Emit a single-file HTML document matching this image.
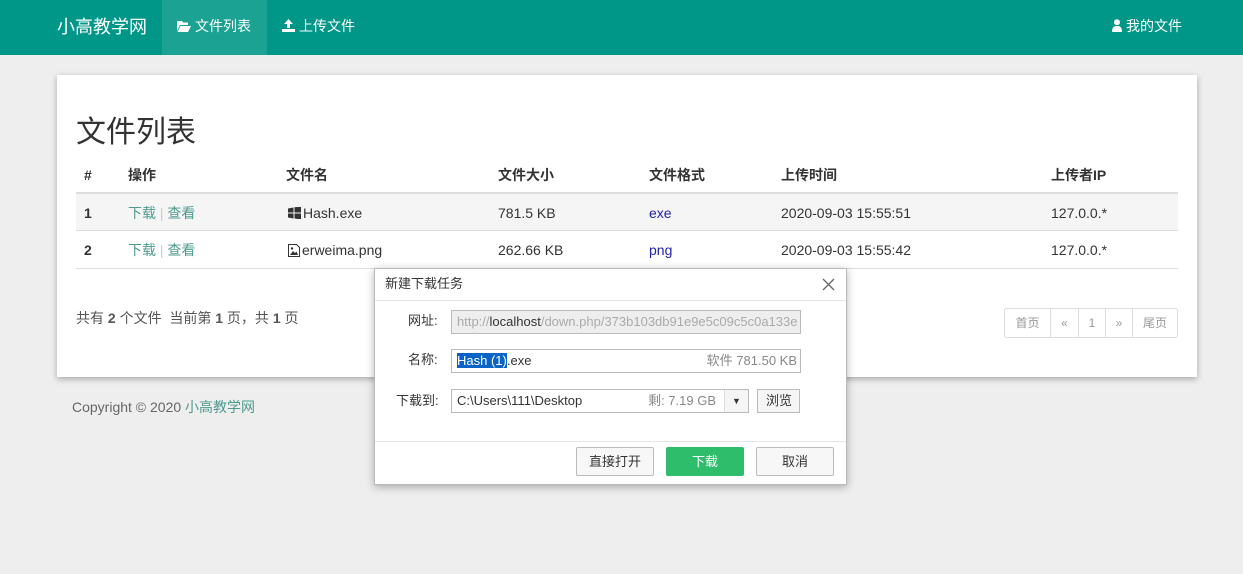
<!DOCTYPE html>
<html><head><meta charset="utf-8"><style>
*{box-sizing:border-box;margin:0;padding:0}
body{width:1243px;height:574px;background:#eee;font-family:"Liberation Sans","Noto Sans CJK SC",sans-serif;font-size:14px;color:#333;position:relative;overflow:hidden}
.nav{position:absolute;left:0;top:0;width:1243px;height:55px;background:#009688}
.nav a{position:absolute;color:#fff;text-decoration:none;top:0;height:51px;font-size:14px;display:flex;align-items:center}
.nav svg{margin-right:4px}
.brand{left:57px;font-size:18px!important}
.act{left:162px;width:105px;height:55px!important;background:#1ba293;padding-left:15px;padding-bottom:4px}
.panel{position:absolute;left:57px;top:75px;width:1140px;height:302px;background:#fff;box-shadow:0 2px 6px rgba(0,0,0,.3)}
h1{position:absolute;left:19px;top:38px;font-size:30px;line-height:40px;font-weight:normal;color:#333}
.t{position:absolute;font-size:14px;line-height:20px;display:flex;align-items:center}
.b{font-weight:bold}
.g{color:#4e9a8e}
.bl{color:#2222aa}
.pg{position:absolute;left:947px;top:233px;height:30px;display:flex;border:1px solid #ddd;border-radius:3px}
.pg span{border-left:1px solid #ddd;line-height:28px;color:#999;font-size:12px;text-align:center}
.dlg{position:absolute;left:374px;top:268px;width:473px;height:217px;background:#fff;border:1px solid #bbb;box-shadow:0 2px 8px rgba(0,0,0,.3);font-size:13px}
.lb{position:absolute;line-height:18px}
.inp{position:absolute;border:1px solid #bbb;height:24px;line-height:22px;padding-left:5px;font-size:13px}
.btn{position:absolute;top:178px;height:29px;width:78px;border:1px solid #bbb;border-radius:2px;background:#f7f7f7;text-align:center;line-height:27px}
</style></head><body>
<div class="nav">
<a class="brand">小高教学网</a>
<a class="act"><svg width="14" height="12" viewBox="0 0 14 12"><path d="M0 1h5l1 1.5h5V5H3L0 11z" fill="#fff"/><path d="M3.5 6H14l-3 6H0.5z" fill="#fff"/></svg>文件列表</a>
<a style="left:282px"><svg width="13" height="13" viewBox="0 0 13 13"><path d="M6.5 0L2 5h3v4h3V5h3z M0 10h13v3H0z" fill="#fff"/></svg>上传文件</a>
<a style="left:1112px"><svg width="10" height="13" viewBox="0 0 10 13"><circle cx="5" cy="3.2" r="3" fill="#fff"/><path d="M0 13c0-5 2-6 5-6s5 1 5 6z" fill="#fff"/></svg>我的文件</a>
</div>
<div class="panel">
<h1>文件列表</h1>
<div style="position:absolute;left:19px;top:117px;width:1102px;height:2px;background:#ddd"></div>
<div style="position:absolute;left:19px;top:119px;width:1102px;height:37px;background:#f5f5f5;border-bottom:1px solid #ddd"></div>
<div style="position:absolute;left:19px;top:193px;width:1102px;height:1px;background:#ddd"></div>
<div class="t b" style="left:27px;top:90px">#</div>
<div class="t b" style="left:71px;top:90px">操作</div>
<div class="t b" style="left:229px;top:90px">文件名</div>
<div class="t b" style="left:441px;top:90px">文件大小</div>
<div class="t b" style="left:592px;top:90px">文件格式</div>
<div class="t b" style="left:724px;top:90px">上传时间</div>
<div class="t b" style="left:994px;top:90px">上传者IP</div>
<div class="t b" style="left:27px;top:128px">1</div>
<div class="t g" style="left:71px;top:128px">下载&nbsp;<span style="color:#ccc">|</span>&nbsp;查看</div>
<div class="t" style="left:231px;top:128px"><svg width="13" height="12" viewBox="0 0 13 12" style="margin-right:2px"><path d="M0 1.5l5.5-1v5H0zM6.5 0.3L13 -0.5v6H6.5zM0 6.5h5.5v5L0 10.5zM6.5 6.5H13v6l-6.5-1z" fill="#333"/></svg>Hash.exe</div>
<div class="t" style="left:441px;top:128px">781.5 KB</div>
<div class="t bl" style="left:592px;top:128px">exe</div>
<div class="t" style="left:724px;top:128px">2020-09-03 15:55:51</div>
<div class="t" style="left:994px;top:128px">127.0.0.*</div>
<div class="t b" style="left:27px;top:165px">2</div>
<div class="t g" style="left:71px;top:165px">下载&nbsp;<span style="color:#ccc">|</span>&nbsp;查看</div>
<div class="t" style="left:231px;top:165px"><svg width="12" height="13" viewBox="0 0 12 13" style="margin-right:2px"><path d="M.5.5h8l3 3v9H.5z" fill="none" stroke="#333"/><path d="M2 11l3-4 2 2 1.5-1.5L10 11z" fill="#333"/><circle cx="4" cy="4.5" r="1.2" fill="#333"/></svg>erweima.png</div>
<div class="t" style="left:441px;top:165px">262.66 KB</div>
<div class="t bl" style="left:592px;top:165px">png</div>
<div class="t" style="left:724px;top:165px">2020-09-03 15:55:42</div>
<div class="t" style="left:994px;top:165px">127.0.0.*</div>
<div class="t" style="left:19px;top:233px;color:#555">共有&nbsp;<b>2</b>&nbsp;个文件 &nbsp;当前第&nbsp;<b>1</b>&nbsp;页，共&nbsp;<b>1</b>&nbsp;页</div>
<div class="pg"><span style="width:45px;border:0">首页</span><span style="width:28px">«</span><span style="width:27px">1</span><span style="width:27px">»</span><span style="width:45px">尾页</span></div>
</div>
<div class="t" style="left:72px;top:397px;color:#666">Copyright © 2020&nbsp;<span class="g">小高教学网</span></div>
<div class="dlg">
<div style="height:32px;border-bottom:1px solid #e5e5e5;line-height:30px;padding-left:10px;color:#333">新建下载任务<svg style="position:absolute;right:11px;top:9px" width="13" height="13" viewBox="0 0 13 13"><path d="M1 1l11 11M12 1L1 12" stroke="#666" stroke-width="1.3"/></svg></div>
<div class="lb" style="left:33px;top:43px">网址:</div>
<div class="inp" style="left:76px;top:41px;width:350px;background:#eee;color:#aaa;overflow:hidden;white-space:nowrap">http://<span style="color:#333">localhost</span>/down.php/373b103db91e9e5c09c5c0a133e</div>
<div class="lb" style="left:33px;top:82px">名称:</div>
<div class="inp" style="left:76px;top:80px;width:350px"><span style="background:#0a64c8;color:#fff">Hash (1)</span>.exe<span style="position:absolute;right:3px;color:#888">软件 781.50 KB</span></div>
<div class="lb" style="left:21px;top:123px">下载到:</div>
<div class="inp" style="left:76px;top:120px;width:298px">C:\Users\111\Desktop<span style="position:absolute;right:32px;color:#888">剩: 7.19 GB</span><span style="position:absolute;right:0;top:0;width:24px;height:22px;border-left:1px solid #ddd;text-align:center;font-size:9px;background:#f5f5f5">▼</span></div>
<div class="inp" style="left:382px;top:120px;width:43px;background:#f5f5f5;padding-left:8px">浏览</div>
<div style="position:absolute;left:0;top:172px;width:100%;height:1px;background:#e5e5e5"></div>
<div class="btn" style="left:201px">直接打开</div>
<div class="btn" style="left:291px;background:#2ebd6b;border-color:#2ebd6b;color:#fff">下载</div>
<div class="btn" style="left:381px">取消</div>
</div>
</body></html>
